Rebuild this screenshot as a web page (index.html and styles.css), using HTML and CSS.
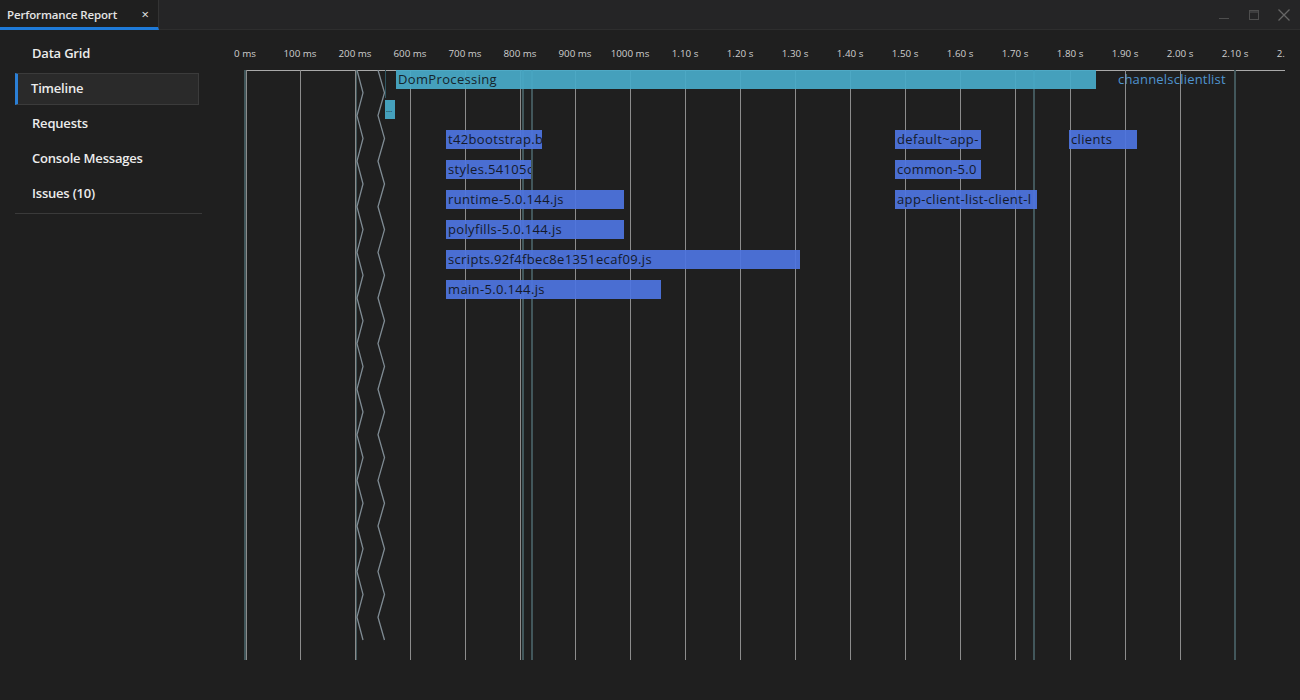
FILE: index.html
```html
<!DOCTYPE html>
<html>
<head>
<meta charset="utf-8">
<title>Performance Report</title>
<link rel="stylesheet" href="styles.css">
</head>
<body>
<div class="titlebar">
  <div class="tab">
    <span class="tab-title">Performance Report</span>
    <span class="tab-close">×</span>
  </div>
  <div class="wincontrols">
    <svg class="wc" width="14" height="14" viewBox="0 0 14 14"><line x1="2" y1="10.5" x2="12" y2="10.5" stroke="#4e4e4e" stroke-width="1"/></svg>
    <svg class="wc" width="14" height="14" viewBox="0 0 14 14"><rect x="2.5" y="2.5" width="9" height="9" fill="none" stroke="#4e4e4e" stroke-width="1"/><line x1="2.5" y1="4" x2="11.5" y2="4" stroke="#4e4e4e" stroke-width="1.2"/></svg>
    <svg class="wc" width="14" height="14" viewBox="0 0 14 14"><path d="M1.5 1.5 L12.5 12.5 M12.5 1.5 L1.5 12.5" stroke="#666" stroke-width="1.3" fill="none"/></svg>
  </div>
</div>
<div class="main">
  <nav class="sidebar">
    <div class="nav-item">Data Grid</div>
    <div class="nav-item active">Timeline</div>
    <div class="nav-item">Requests</div>
    <div class="nav-item">Console Messages</div>
    <div class="nav-item">Issues (10)</div>
    <div class="nav-sep"></div>
  </nav>
  <section class="timeline">
    <div class="axis">
      <span class="tick" style="left:20px">0 ms</span>
      <span class="tick" style="left:75px">100 ms</span>
      <span class="tick" style="left:130px">200 ms</span>
      <span class="tick" style="left:185px">600 ms</span>
      <span class="tick" style="left:240px">700 ms</span>
      <span class="tick" style="left:295px">800 ms</span>
      <span class="tick" style="left:350px">900 ms</span>
      <span class="tick" style="left:405px">1000 ms</span>
      <span class="tick" style="left:460px">1.10 s</span>
      <span class="tick" style="left:515px">1.20 s</span>
      <span class="tick" style="left:570px">1.30 s</span>
      <span class="tick" style="left:625px">1.40 s</span>
      <span class="tick" style="left:680px">1.50 s</span>
      <span class="tick" style="left:735px">1.60 s</span>
      <span class="tick" style="left:790px">1.70 s</span>
      <span class="tick" style="left:845px">1.80 s</span>
      <span class="tick" style="left:900px">1.90 s</span>
      <span class="tick" style="left:955px">2.00 s</span>
      <span class="tick" style="left:1010px">2.10 s</span>
      <span class="tick" style="left:1065px">2.20 s</span>
    </div>
    <div class="header-line"></div>

    <div class="grid teal wide" style="left:19px"></div>
    <div class="grid" style="left:21px"></div>
    <div class="grid" style="left:75px"></div>
    <div class="grid" style="left:130px"></div>
    <div class="grid teal" style="left:131px"></div>
    <div class="grid" style="left:185px"></div>
    <div class="grid" style="left:240px"></div>
    <div class="grid" style="left:295px"></div>
    <div class="grid teal wide" style="left:297px"></div>
    <div class="grid teal wide" style="left:306px"></div>
    <div class="grid" style="left:350px"></div>
    <div class="grid" style="left:405px"></div>
    <div class="grid" style="left:460px"></div>
    <div class="grid" style="left:515px"></div>
    <div class="grid" style="left:570px"></div>
    <div class="grid" style="left:625px"></div>
    <div class="grid" style="left:680px"></div>
    <div class="grid" style="left:735px"></div>
    <div class="grid" style="left:790px"></div>
    <div class="grid teal wide" style="left:808px"></div>
    <div class="grid" style="left:845px"></div>
    <div class="grid" style="left:900px"></div>
    <div class="grid" style="left:955px"></div>
    <div class="grid teal wide" style="left:1009px"></div>
    <div class="grid teal short" style="left:160px"></div>

    <svg class="zigzag" width="40" height="600" viewBox="0 0 40 600">
      <polyline class="zz" points="7,0 13,22.8 7,45.6 13,68.4 7,91.2 13,114 7,136.8 13,159.6 7,182.4 13,205.2 7,228 13,250.8 7,273.6 13,296.4 7,319.2 13,342 7,364.8 13,387.6 7,410.4 13,433.2 7,456 13,478.8 7,501.6 13,524.4 7,547.2 13,570"/>
      <polyline class="zz" points="28,0 34.5,22.8 28,45.6 34.5,68.4 28,91.2 34.5,114 28,136.8 34.5,159.6 28,182.4 34.5,205.2 28,228 34.5,250.8 28,273.6 34.5,296.4 28,319.2 34.5,342 28,364.8 34.5,387.6 28,410.4 34.5,433.2 28,456 34.5,478.8 28,501.6 34.5,524.4 28,547.2 34.5,570"/>
    </svg>

    <div class="bar dom" style="left:171px;top:40px;width:700px">DomProcessing</div>
    <div class="bar dom tiny" style="left:160px;top:70px;width:10px">…</div>
    <div class="label-link" style="left:893px;top:40px">channelsclientlist</div>

    <div class="bar res" style="left:221px;top:100px;width:96px">t42bootstrap.b</div>
    <div class="bar res" style="left:221px;top:130px;width:85px">styles.54105c</div>
    <div class="bar res" style="left:221px;top:160px;width:178px">runtime-5.0.144.js</div>
    <div class="bar res" style="left:221px;top:190px;width:178px">polyfills-5.0.144.js</div>
    <div class="bar res" style="left:221px;top:220px;width:354px">scripts.92f4fbec8e1351ecaf09.js</div>
    <div class="bar res" style="left:221px;top:250px;width:215px">main-5.0.144.js</div>

    <div class="bar res" style="left:670px;top:100px;width:86px">default~app-</div>
    <div class="bar res" style="left:670px;top:130px;width:86px">common-5.0</div>
    <div class="bar res" style="left:670px;top:160px;width:142px">app-client-list-client-l</div>
    <div class="bar res" style="left:844px;top:100px;width:68px">clients</div>
  </section>
</div>
</body>
</html>
```
FILE: styles.css
```css
html, body {
  margin: 0;
  padding: 0;
}
body {
  width: 1300px;
  height: 700px;
  overflow: hidden;
  background: #1f1f1f;
  color: #e6e6e6;
  font-family: "Open Sans", "Noto Sans", sans-serif;
}

/* title bar */
.titlebar {
  height: 29px;
  display: flex;
  background: #252526;
  border-bottom: 1px solid #2e2e2e;
}
.tab {
  width: 159px;
  box-sizing: border-box;
  height: 30px;
  background: #1f1f1f;
  border-right: 1px solid #333;
  border-bottom: 3px solid #1e7ad8;
  display: flex;
  align-items: center;
  justify-content: space-between;
  padding: 2px 9px 0 7px;
}
.tab-title {
  font-size: 11.5px;
  font-weight: 600;
  color: #e4e4e4;
  letter-spacing: -0.15px;
}
.tab-close {
  font-size: 13px;
  color: #e8e8e8;
  line-height: 1;
}
.wincontrols {
  margin-left: auto;
  display: flex;
  align-items: center;
  gap: 16px;
  padding-right: 9px;
}
.wc {
  display: block;
}

/* main */
.main {
  display: flex;
  height: 670px;
}
.sidebar {
  width: 187px;
  margin-left: 15px;
  padding-top: 8px;
  flex: none;
}
.nav-item {
  height: 32px;
  box-sizing: border-box;
  margin-bottom: 3px;
  display: flex;
  align-items: center;
  padding: 0 0 2px 16px;
  border: 1px solid transparent;
  width: 184px;
  font-size: 13px;
  font-weight: 600;
  color: #ececec;
  letter-spacing: -0.2px;
}
.nav-item.active {
  background: #2a2a2a;
  border-color: #3b3b3b;
  border-left: 3px solid #2b7fd5;
  padding-left: 13px;
}
.nav-sep {
  height: 1px;
  background: #3a3a3a;
  margin-top: 3px;
}

/* timeline */
.timeline {
  position: relative;
  margin-left: 23px;
  width: 1060px;
  height: 670px;
  overflow: hidden;
  flex: none;
}
.axis {
  height: 40px;
  position: relative;
}
.tick {
  position: absolute;
  top: 18px;
  transform: translateX(-50%);
  font-size: 9.8px;
  line-height: 12px;
  color: #cfcfcf;
  white-space: nowrap;
}
.header-line {
  position: absolute;
  left: 21px;
  top: 40px;
  width: 1039px;
  height: 1px;
  background: #a9a9a9;
}
.grid {
  position: absolute;
  top: 40px;
  height: 590px;
  width: 1px;
  background: #8c8c8c;
}
.grid.teal {
  background: #42575b;
}
.grid.wide {
  width: 2px;
}
.grid.short {
  height: 28px;
  background: #2f5560;
}
.zigzag {
  position: absolute;
  left: 125px;
  top: 40px;
}
.zz {
  fill: none;
  stroke: #7f8b93;
  stroke-width: 1.3;
}
.bar {
  position: absolute;
  height: 19px;
  box-sizing: border-box;
  padding-left: 2px;
  font-size: 13px;
  line-height: 19px;
  letter-spacing: 0.35px;
  white-space: nowrap;
  overflow: hidden;
  color: #17202a;
}
.bar.dom {
  background: rgba(72, 170, 200, 0.93);
  color: #15242b;
}
.bar.tiny {
  font-size: 8px;
  letter-spacing: 0;
  padding-left: 1px;
  line-height: 17px;
}
.bar.res {
  background: rgba(78, 116, 224, 0.93);
  color: #141a2c;
}
.label-link {
  position: absolute;
  height: 19px;
  line-height: 19px;
  font-size: 13px;
  letter-spacing: 0.2px;
  color: #4f94cf;
  white-space: nowrap;
}
```
